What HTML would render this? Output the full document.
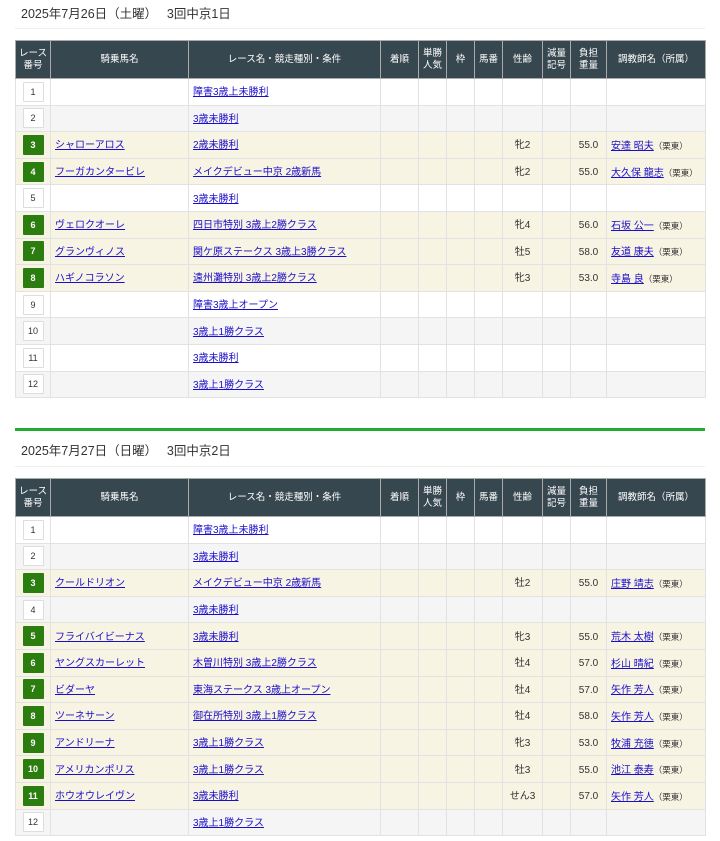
<!DOCTYPE html>
<html><head><meta charset="utf-8"><style>
body{margin:0;background:#fff;font-family:"Liberation Sans","Noto Sans CJK JP",sans-serif;color:#333;width:720px;height:841px;overflow:hidden;position:relative}
.title{position:absolute;left:21px;font-size:12.5px;color:#333}
.sep{position:absolute;left:15px;width:690px;height:1px;background:#eee}
table{position:absolute;left:15px;width:690px;border-collapse:collapse;table-layout:fixed;font-size:10px}
th{background:#37474f;color:#fff;font-weight:normal;border:1px solid #aaa;height:37px;line-height:12px;padding:0;font-size:9.5px}
td{border:1px solid #e2e2e2;height:22.6px;padding:3px 0 0 0;text-align:center;vertical-align:middle;line-height:14px}
tr.g td{background:#f5f5f5}
tr.c td{background:#f8f4e3}
td.l{text-align:left;padding-left:4px}
a{color:#1a0dcc;text-decoration:underline}
.n{display:inline-block;vertical-align:middle;margin-top:-3px;width:19px;height:18px;line-height:18px;border:1px solid #ddd;background:#fff;font-size:9px;color:#333;border-radius:1px}
.h{background:#2a7d0e;color:#fff;font-weight:bold;border-color:#2a7d0e}
.s{color:#333;font-size:8.5px}
</style></head><body>
<div class="title" style="top:3px">2025年7月26日（土曜）　 3回中京1日</div>
<div class="sep" style="top:28px"></div>
<table style="top:40px">
<colgroup><col style="width:35px"><col style="width:138px"><col style="width:192px"><col style="width:38px"><col style="width:28px"><col style="width:28px"><col style="width:28px"><col style="width:40px"><col style="width:28px"><col style="width:36px"><col style="width:99px"></colgroup>
<tr><th>レース<br>番号</th><th>騎乗馬名</th><th>レース名・競走種別・条件</th><th>着順</th><th>単勝<br>人気</th><th>枠</th><th>馬番</th><th>性齢</th><th>減量<br>記号</th><th>負担<br>重量</th><th>調教師名（所属）</th></tr>
<tr><td><span class="n">1</span></td><td></td><td class="l"><a>障害3歳上未勝利</a></td><td></td><td></td><td></td><td></td><td></td><td></td><td></td><td></td></tr>
<tr class="g"><td><span class="n">2</span></td><td></td><td class="l"><a>3歳未勝利</a></td><td></td><td></td><td></td><td></td><td></td><td></td><td></td><td></td></tr>
<tr class="c"><td><span class="n h">3</span></td><td class="l"><a>シャローアロス</a></td><td class="l"><a>2歳未勝利</a></td><td></td><td></td><td></td><td></td><td>牝2</td><td></td><td>55.0</td><td class="l"><a>安達 昭夫</a><span class="s">（栗東）</span></td></tr>
<tr class="c"><td><span class="n h">4</span></td><td class="l"><a>フーガカンタービレ</a></td><td class="l"><a>メイクデビュー中京 2歳新馬</a></td><td></td><td></td><td></td><td></td><td>牝2</td><td></td><td>55.0</td><td class="l"><a>大久保 龍志</a><span class="s">（栗東）</span></td></tr>
<tr><td><span class="n">5</span></td><td></td><td class="l"><a>3歳未勝利</a></td><td></td><td></td><td></td><td></td><td></td><td></td><td></td><td></td></tr>
<tr class="c"><td><span class="n h">6</span></td><td class="l"><a>ヴェロクオーレ</a></td><td class="l"><a>四日市特別 3歳上2勝クラス</a></td><td></td><td></td><td></td><td></td><td>牝4</td><td></td><td>56.0</td><td class="l"><a>石坂 公一</a><span class="s">（栗東）</span></td></tr>
<tr class="c"><td><span class="n h">7</span></td><td class="l"><a>グランヴィノス</a></td><td class="l"><a>関ケ原ステークス 3歳上3勝クラス</a></td><td></td><td></td><td></td><td></td><td>牡5</td><td></td><td>58.0</td><td class="l"><a>友道 康夫</a><span class="s">（栗東）</span></td></tr>
<tr class="c"><td><span class="n h">8</span></td><td class="l"><a>ハギノコラソン</a></td><td class="l"><a>遠州灘特別 3歳上2勝クラス</a></td><td></td><td></td><td></td><td></td><td>牝3</td><td></td><td>53.0</td><td class="l"><a>寺島 良</a><span class="s">（栗東）</span></td></tr>
<tr><td><span class="n">9</span></td><td></td><td class="l"><a>障害3歳上オープン</a></td><td></td><td></td><td></td><td></td><td></td><td></td><td></td><td></td></tr>
<tr class="g"><td><span class="n">10</span></td><td></td><td class="l"><a>3歳上1勝クラス</a></td><td></td><td></td><td></td><td></td><td></td><td></td><td></td><td></td></tr>
<tr><td><span class="n">11</span></td><td></td><td class="l"><a>3歳未勝利</a></td><td></td><td></td><td></td><td></td><td></td><td></td><td></td><td></td></tr>
<tr class="g"><td><span class="n">12</span></td><td></td><td class="l"><a>3歳上1勝クラス</a></td><td></td><td></td><td></td><td></td><td></td><td></td><td></td><td></td></tr>
</table>
<div style="position:absolute;left:15px;top:428px;width:690px;height:3px;background:#22aa33"></div>
<div class="title" style="top:440px">2025年7月27日（日曜）　 3回中京2日</div>
<div class="sep" style="top:466px"></div>
<table style="top:478px">
<colgroup><col style="width:35px"><col style="width:138px"><col style="width:192px"><col style="width:38px"><col style="width:28px"><col style="width:28px"><col style="width:28px"><col style="width:40px"><col style="width:28px"><col style="width:36px"><col style="width:99px"></colgroup>
<tr><th>レース<br>番号</th><th>騎乗馬名</th><th>レース名・競走種別・条件</th><th>着順</th><th>単勝<br>人気</th><th>枠</th><th>馬番</th><th>性齢</th><th>減量<br>記号</th><th>負担<br>重量</th><th>調教師名（所属）</th></tr>
<tr><td><span class="n">1</span></td><td></td><td class="l"><a>障害3歳上未勝利</a></td><td></td><td></td><td></td><td></td><td></td><td></td><td></td><td></td></tr>
<tr class="g"><td><span class="n">2</span></td><td></td><td class="l"><a>3歳未勝利</a></td><td></td><td></td><td></td><td></td><td></td><td></td><td></td><td></td></tr>
<tr class="c"><td><span class="n h">3</span></td><td class="l"><a>クールドリオン</a></td><td class="l"><a>メイクデビュー中京 2歳新馬</a></td><td></td><td></td><td></td><td></td><td>牡2</td><td></td><td>55.0</td><td class="l"><a>庄野 靖志</a><span class="s">（栗東）</span></td></tr>
<tr class="g"><td><span class="n">4</span></td><td></td><td class="l"><a>3歳未勝利</a></td><td></td><td></td><td></td><td></td><td></td><td></td><td></td><td></td></tr>
<tr class="c"><td><span class="n h">5</span></td><td class="l"><a>フライバイビーナス</a></td><td class="l"><a>3歳未勝利</a></td><td></td><td></td><td></td><td></td><td>牝3</td><td></td><td>55.0</td><td class="l"><a>荒木 太樹</a><span class="s">（栗東）</span></td></tr>
<tr class="c"><td><span class="n h">6</span></td><td class="l"><a>ヤングスカーレット</a></td><td class="l"><a>木曽川特別 3歳上2勝クラス</a></td><td></td><td></td><td></td><td></td><td>牡4</td><td></td><td>57.0</td><td class="l"><a>杉山 晴紀</a><span class="s">（栗東）</span></td></tr>
<tr class="c"><td><span class="n h">7</span></td><td class="l"><a>ビダーヤ</a></td><td class="l"><a>東海ステークス 3歳上オープン</a></td><td></td><td></td><td></td><td></td><td>牡4</td><td></td><td>57.0</td><td class="l"><a>矢作 芳人</a><span class="s">（栗東）</span></td></tr>
<tr class="c"><td><span class="n h">8</span></td><td class="l"><a>ツーネサーン</a></td><td class="l"><a>御在所特別 3歳上1勝クラス</a></td><td></td><td></td><td></td><td></td><td>牡4</td><td></td><td>58.0</td><td class="l"><a>矢作 芳人</a><span class="s">（栗東）</span></td></tr>
<tr class="c"><td><span class="n h">9</span></td><td class="l"><a>アンドリーナ</a></td><td class="l"><a>3歳上1勝クラス</a></td><td></td><td></td><td></td><td></td><td>牝3</td><td></td><td>53.0</td><td class="l"><a>牧浦 充徳</a><span class="s">（栗東）</span></td></tr>
<tr class="c"><td><span class="n h">10</span></td><td class="l"><a>アメリカンポリス</a></td><td class="l"><a>3歳上1勝クラス</a></td><td></td><td></td><td></td><td></td><td>牡3</td><td></td><td>55.0</td><td class="l"><a>池江 泰寿</a><span class="s">（栗東）</span></td></tr>
<tr class="c"><td><span class="n h">11</span></td><td class="l"><a>ホウオウレイヴン</a></td><td class="l"><a>3歳未勝利</a></td><td></td><td></td><td></td><td></td><td>せん3</td><td></td><td>57.0</td><td class="l"><a>矢作 芳人</a><span class="s">（栗東）</span></td></tr>
<tr class="g"><td><span class="n">12</span></td><td></td><td class="l"><a>3歳上1勝クラス</a></td><td></td><td></td><td></td><td></td><td></td><td></td><td></td><td></td></tr>
</table>
</body></html>
